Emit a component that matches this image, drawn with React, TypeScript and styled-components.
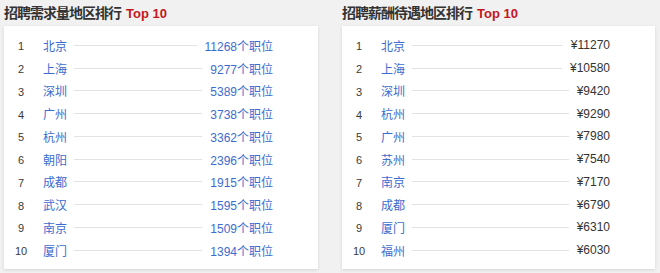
import styled, { createGlobalStyle } from "styled-components";

const GlobalStyle = createGlobalStyle`
  html, body {
    margin: 0;
    padding: 0;
    background: #f1f1f1;
  }
  body {
    font-family: "Liberation Sans", "Noto Sans CJK SC", sans-serif;
    color: #333;
  }
`;

const Page = styled.div`
  display: grid;
  grid-template-columns: 314px 313px;
  column-gap: 24px;
  padding: 0 0 0 4px;
  width: 660px;
  height: 273px;
  box-sizing: border-box;
`;

const Panel = styled.section`
  display: flex;
  flex-direction: column;
`;

const Title = styled.h3`
  margin: 0;
  height: 26px;
  line-height: 26px;
  font-size: 14px;
  letter-spacing: -1px;
  font-weight: bold;
  color: #333;
  white-space: nowrap;

  span {
    font-size: 13px;
    letter-spacing: 0;
    color: #c4161c;
    margin-left: 5px;
  }
`;

const Card = styled.ol`
  list-style: none;
  margin: 0;
  padding: 8px 45px 7px 4px;
  background: #fff;
  box-shadow: 0 1px 3px rgba(0, 0, 0, 0.12);
`;

const Row = styled.li`
  display: flex;
  align-items: center;
  height: 22.75px;
  font-size: 12px;
`;

const Rank = styled.span`
  width: 26px;
  padding-top: 2px;
  text-align: center;
  font-size: 11px;
  color: #3a3a3a;
`;

const City = styled.span`
  margin-left: 9px;
  color: #3d6cd0;
`;

const Line = styled.span`
  flex: 1;
  height: 1px;
  background: #e3e3e3;
  margin: 0 8px 0 7px;
`;

const Value = styled.span<{ $blue?: boolean }>`
  color: ${(p) => (p.$blue ? "#3d6cd0" : "#333")};
  white-space: nowrap;
`;

const demand: [string, string][] = [
  ["北京", "11268个职位"],
  ["上海", "9277个职位"],
  ["深圳", "5389个职位"],
  ["广州", "3738个职位"],
  ["杭州", "3362个职位"],
  ["朝阳", "2396个职位"],
  ["成都", "1915个职位"],
  ["武汉", "1595个职位"],
  ["南京", "1509个职位"],
  ["厦门", "1394个职位"],
];

const salary: [string, string][] = [
  ["北京", "¥11270"],
  ["上海", "¥10580"],
  ["深圳", "¥9420"],
  ["杭州", "¥9290"],
  ["广州", "¥7980"],
  ["苏州", "¥7540"],
  ["南京", "¥7170"],
  ["成都", "¥6790"],
  ["厦门", "¥6310"],
  ["福州", "¥6030"],
];

const Ranking = ({
  title,
  rows,
  blue,
}: {
  title: string;
  rows: [string, string][];
  blue?: boolean;
}) => (
  <Panel>
    <Title>
      {title}
      <span>Top 10</span>
    </Title>
    <Card>
      {rows.map(([city, value], i) => (
        <Row key={city}>
          <Rank>{i + 1}</Rank>
          <City>{city}</City>
          <Line />
          <Value $blue={blue}>{value}</Value>
        </Row>
      ))}
    </Card>
  </Panel>
);

export default function App() {
  return (
    <>
      <GlobalStyle />
      <Page>
        <Ranking title="招聘需求量地区排行" rows={demand} blue />
        <Ranking title="招聘薪酬待遇地区排行" rows={salary} />
      </Page>
    </>
  );
}
